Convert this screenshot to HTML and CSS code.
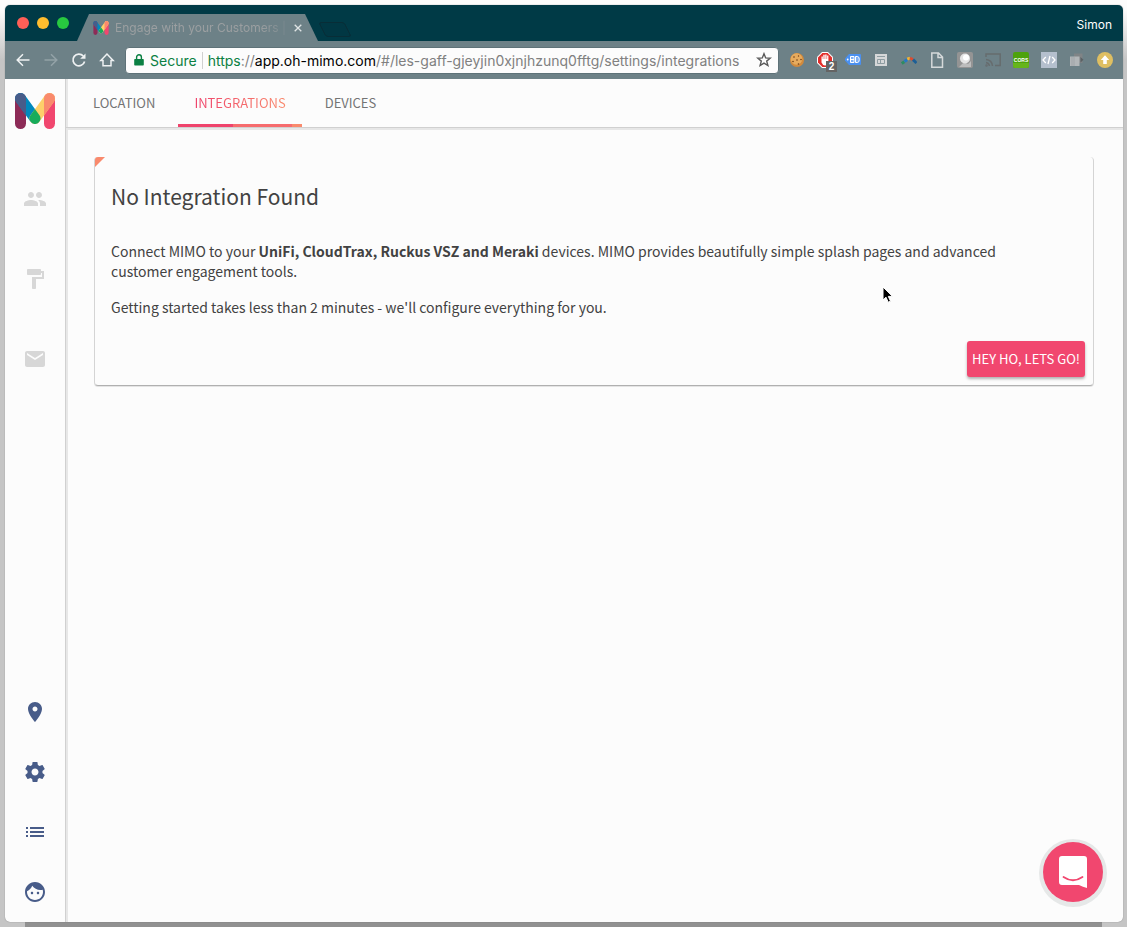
FILE: index.html
```html
<!DOCTYPE html>
<html lang="en">
<head>
<meta charset="utf-8">
<title>Engage with your Customers</title>
<link rel="stylesheet" href="styles.css">
</head>
<body>
<svg class="defs" width="0" height="0" aria-hidden="true">
  <defs>
    <clipPath id="leftBar"><rect x="0" y="0" width="11" height="36" rx="5.5"/></clipPath>
    <clipPath id="rightBar"><rect x="29" y="0" width="11" height="36" rx="5.5"/></clipPath>
    <clipPath id="fallBar"><rect x="-5.5" y="-5.5" width="35.7" height="11" rx="5.5" transform="translate(5.5 5.5) rotate(54)"/></clipPath>
  </defs>
  <symbol id="logo" viewBox="0 0 40 36">
    <rect x="0" y="0" width="11" height="36" rx="5.5" fill="#8d2b57"/>
    <rect x="29" y="0" width="11" height="36" rx="5.5" fill="#f1476f"/>
    <path d="M5.5 5.5 20 25.5" stroke="#0089bd" stroke-width="11" stroke-linecap="round"/>
    <path d="M34.5 5.5 20 25.5" stroke="#fdd06a" stroke-width="11" stroke-linecap="round"/>
    <g clip-path="url(#leftBar)"><path d="M5.5 5.5 20 25.5" stroke="#485c89" stroke-width="11" stroke-linecap="round"/></g>
    <g clip-path="url(#rightBar)"><path d="M34.5 5.5 20 25.5" stroke="#f98a6d" stroke-width="11" stroke-linecap="round"/></g>
    <g clip-path="url(#fallBar)"><path d="M34.5 5.5 20 25.5" stroke="#17ac5b" stroke-width="11" stroke-linecap="round"/></g>
  </symbol>
</svg>

<div class="window">
  <header class="titlebar">
    <div class="lights">
      <button class="light red" aria-label="Close window"></button>
      <button class="light amber" aria-label="Minimise window"></button>
      <button class="light green" aria-label="Zoom window"></button>
    </div>
    <div class="browser-tab">
      <svg class="favicon" viewBox="0 0 40 36"><use href="#logo"/></svg>
      <span class="tab-title">Engage with your Customers |</span>
      <button class="tab-close" aria-label="Close tab">
        <svg width="8" height="8" viewBox="0 0 8 8"><path d="M.7.7l6.600 6.600M7.300.7L.7 7.300" stroke="#dfe4e5" stroke-width="1.300"/></svg>
      </button>
    </div>
    <button class="new-tab" aria-label="New tab">
      <svg width="34" height="17" viewBox="0 0 34 17"><path d="M3 1.500h21q2 0 3 2l5 10q1 2-1 2H10q-2 0-3-2L2 3.500q-1-2 1-2z" fill="#013743" stroke="#082d37"/></svg>
    </button>
    <span class="profile">Simon</span>
  </header>

  <div class="toolbar">
    <nav class="nav-buttons">
      <button aria-label="Back"><svg width="16" height="16" viewBox="0 0 16 16"><path d="M14.500 8H2.500M8 2.200 2.200 8 8 13.800" fill="none" stroke="#eef1f2" stroke-width="1.500"/></svg></button>
      <button aria-label="Forward"><svg width="16" height="16" viewBox="0 0 16 16"><path d="M1.500 8h12M8 2.200 13.800 8 8 13.800" fill="none" stroke="#93a2a7" stroke-width="1.500"/></svg></button>
      <button aria-label="Reload"><svg width="16" height="16" viewBox="0 0 16 16"><path d="M13.600 9.500A5.900 5.900 0 1 1 12.300 4" fill="none" stroke="#eef1f2" stroke-width="1.700"/><path d="M14.500 1.500v5.300H9.200z" fill="#eef1f2"/></svg></button>
      <button aria-label="Home"><svg width="16" height="16" viewBox="0 0 16 16"><path d="M8 2 1.800 8.600H4v5.200h8V8.600h2.200z" fill="none" stroke="#eef1f2" stroke-width="1.500"/></svg></button>
    </nav>
    <div class="omnibox">
      <svg class="lock" width="10" height="12" viewBox="0 0 10 12"><path d="M1 5h8q.8 0 .8.800v5q0 .8-.8.800H1q-.8 0-.8-.8v-5Q.2 5 1 5z" fill="#0b8043"/><path d="M2.600 5.500V3.200a2.400 2.400 0 0 1 4.800 0v2.300" fill="none" stroke="#0b8043" stroke-width="1.400"/></svg>
      <span class="secure">Secure</span>
      <div class="address" role="textbox" contenteditable="true" spellcheck="false" aria-label="Address"><span class="scheme">https</span>://<span class="host">app.oh-mimo.com</span>/#/les-gaff-gjeyjin0xjnjhzunq0fftg/settings/integrations</div>
      <button class="star" aria-label="Bookmark"><svg width="16" height="16" viewBox="0 0 16 16"><path d="M8 1.700l1.700 4.200 4.500.3-3.500 2.900 1.200 4.400L8 11.100l-3.900 2.400 1.200-4.400L1.800 6.200l4.500-.3z" fill="none" stroke="#5a5a5a" stroke-width="1.400"/></svg></button>
    </div>
    <div class="extensions">
      <button aria-label="Cookies"><svg width="16" height="16" viewBox="0 0 16 16"><circle cx="8" cy="8" r="7" fill="#d28a3c"/><circle cx="7.500" cy="7" r="5.800" fill="#e6ab5e"/><g fill="#6e3d17"><circle cx="5" cy="5" r=".8"/><circle cx="9.500" cy="4" r=".7"/><circle cx="12" cy="7.500" r=".8"/><circle cx="8" cy="8" r=".8"/><circle cx="4" cy="9.500" r=".8"/><circle cx="9.500" cy="12" r=".8"/></g></svg></button>
      <button class="badged" aria-label="Ad blocker"><svg width="16" height="16" viewBox="0 0 16 16"><path d="M5 0h6l5 5v6l-5 5H5l-5-5V5z" fill="#fff"/><path d="M5.400 1h5.200L15 5.400v5.200L10.600 15H5.400L1 10.600V5.400z" fill="#e22d2a"/><path d="M4.500 8V4.500h1.300V7h.5V2.800h1.400V7h.5V2.500h1.400V7h.5V3.600h1.300v6.200q0 3.700-3.400 3.700-2.200 0-3.500-3z" fill="#fff"/></svg><span class="badge">2</span></button>
      <button aria-label="Tag assistant"><svg width="16" height="16" viewBox="0 0 16 16"><path d="M4 2h11q1 0 1 1v9q0 1-1 1H4L0 8.500v-2z" fill="#4a90f0"/><path d="M5.500 4.500H9v6H5.500zM5.500 7.500H9M10.500 4.500h2q1.800 0 1.800 3t-1.800 3h-2z" fill="#7fb0f5" stroke="#fff"/><circle cx="2.700" cy="7.500" r=".9" fill="#fff"/></svg></button>
      <button aria-label="Page layout"><svg width="16" height="16" viewBox="0 0 16 16"><path d="M2 2h12v12H2z" fill="#d5d7d8"/><path d="M4 4.500h8M4.500 7.500h7v4h-7zM7.500 7.500v4" fill="none" stroke="#8d9ca1"/></svg></button>
      <button aria-label="Analytics"><svg width="16" height="16" viewBox="0 0 16 16" fill="none" stroke-width="3"><path d="M.8 11.500l2.500-1.800" stroke="#2f8b62"/><path d="M3.500 9.500 6.300 7.500" stroke="#2579c5"/><path d="M6.300 7.200 9 6" stroke="#efb434"/><path d="M9 6l3 1.700" stroke="#d94d32"/><path d="M12 7.700l3.500 3.300" stroke="#1d5f96"/></svg></button>
      <button aria-label="Document"><svg width="16" height="16" viewBox="0 0 16 16"><path d="M2.800 1h6.700l4 4v10.200H2.800zM9 1v4.500h4.500" fill="none" stroke="#d5d9da" stroke-width="1.500"/></svg></button>
      <button aria-label="Balloon"><svg width="16" height="16" viewBox="0 0 16 16"><rect width="16" height="16" rx="2" fill="#949494"/><path d="M2 15l5-5 4 2 3-3v6z" fill="#bcbcbc"/><circle cx="8" cy="6.500" r="5" fill="#e4e4e4"/><circle cx="9" cy="5.500" r="3" fill="#fff"/></svg></button>
      <button aria-label="Cast"><svg width="16" height="16" viewBox="0 0 16 16" fill="none" stroke="#666c6e" stroke-width="1.500"><path d="M1 5V2h14.200v11.500H10M1 7.500q6 .5 6.500 6.500M1 10.500q3 .5 3.500 3.500"/><circle cx="1.500" cy="13.500" r=".5"/></svg></button>
      <button aria-label="CORS"><svg width="16" height="16" viewBox="0 0 16 16"><rect width="16" height="16" rx="2" fill="#4da20d"/><path d="M0 11h16v3q0 2-2 2H2q-2 0-2-2z" fill="#66b51b"/><text class="cors" x="8" y="10" text-anchor="middle">CORS</text></svg></button>
      <button aria-label="Code"><svg width="16" height="16" viewBox="0 0 16 16"><path d="M0 0h16v16H0z" fill="#b4bfcd"/><path d="M4.800 5 2 8l2.800 3M11.200 5 14 8l-2.800 3M9 4 7 12" fill="none" stroke="#fff" stroke-width="1.300"/></svg></button>
      <button aria-label="Windows"><svg width="16" height="16" viewBox="0 0 16 16"><path d="M5 1.500h8.500v9.500H5z" fill="#808486"/><path d="M1 4.500h9.500V14H1z" fill="#b2b6b8"/><path d="M3 5v9M5 5v9" stroke="#989fa2" stroke-width=".7"/><path d="M11.500 5 14.500 7.800l-3 2.700z" fill="#5a6164"/></svg></button>
      <button aria-label="Update available"><svg width="16" height="16" viewBox="0 0 16 16"><circle cx="8" cy="8" r="8" fill="#dfbf62"/><path d="M8 3.200 12.200 8H9.800v4H6.200V8H3.800z" fill="#fff"/></svg></button>
    </div>
  </div>

  <div class="app">
    <aside class="sidebar">
      <a href="#" class="brand" aria-label="Home"><svg width="40" height="36" viewBox="0 0 40 36"><use href="#logo"/></svg></a>
      <nav class="side-top">
        <a href="#" aria-label="People"><svg viewBox="0 0 24 24"><path d="M16 11c1.660 0 2.990-1.340 2.990-3S17.660 5 16 5s-3 1.340-3 3 1.340 3 3 3zm-8 0c1.660 0 2.990-1.340 2.990-3S9.660 5 8 5 5 6.340 5 8s1.340 3 3 3zm0 2c-2.330 0-7 1.170-7 3.500V19h14v-2.500c0-2.330-4.670-3.500-7-3.500zm8 0c-.29 0-.62.020-.97.050 1.160.84 1.970 1.970 1.970 3.450V19h6v-2.500c0-2.330-4.670-3.500-7-3.500z"/></svg></a>
        <a href="#" aria-label="Branding"><svg viewBox="0 0 24 24"><path d="M18 4V3c0-.55-.45-1-1-1H5c-.55 0-1 .45-1 1v4c0 .55.45 1 1 1h12c.55 0 1-.45 1-1V6h1v4H9v11c0 .55.45 1 1 1h2c.55 0 1-.45 1-1v-9h8V4h-3z"/></svg></a>
        <a href="#" aria-label="Mail"><svg viewBox="0 0 24 24"><path d="M20 4H4c-1.100 0-1.990.9-1.990 2L2 18c0 1.100.9 2 2 2h16c1.100 0 2-.9 2-2V6c0-1.100-.9-2-2-2zm0 4l-8 5-8-5V6l8 5 8-5v2z"/></svg></a>
      </nav>
      <nav class="side-bottom">
        <a href="#" aria-label="Location"><svg viewBox="0 0 24 24"><path d="M12 2C8.130 2 5 5.130 5 9c0 5.250 7 13 7 13s7-7.750 7-13c0-3.870-3.130-7-7-7zm0 9.500c-1.380 0-2.500-1.120-2.500-2.500s1.120-2.500 2.500-2.500 2.500 1.120 2.500 2.500-1.120 2.500-2.500 2.500z"/></svg></a>
        <a href="#" aria-label="Settings"><svg viewBox="0 0 24 24"><path d="M19.430 12.980c.04-.32.070-.64.070-.98s-.03-.66-.07-.98l2.110-1.650c.19-.15.24-.42.120-.64l-2-3.460c-.12-.22-.39-.3-.61-.22l-2.490 1c-.52-.4-1.080-.73-1.690-.98l-.38-2.650C14.460 2.180 14.250 2 14 2h-4c-.25 0-.46.180-.49.420l-.38 2.650c-.61.250-1.170.59-1.690.98l-2.490-1c-.23-.09-.49 0-.61.220l-2 3.460c-.13.220-.07.490.12.640l2.110 1.650c-.04.320-.07.650-.07.980s.03.660.07.980l-2.110 1.650c-.19.150-.24.420-.12.640l2 3.460c.12.220.39.300.61.220l2.490-1c.52.400 1.080.730 1.690.980l.38 2.650c.03.240.24.420.49.420h4c.25 0 .46-.18.49-.42l.38-2.650c.61-.25 1.170-.59 1.690-.98l2.490 1c.23.090.49 0 .61-.22l2-3.460c.12-.22.070-.49-.12-.64l-2.110-1.650zM12 15.500c-1.930 0-3.500-1.570-3.500-3.500s1.570-3.500 3.500-3.500 3.500 1.570 3.500 3.500-1.570 3.500-3.500 3.500z"/></svg></a>
        <a href="#" aria-label="List"><svg viewBox="0 0 24 24"><path d="M3 13h2v-2H3v2zm0 4h2v-2H3v2zm0-8h2V7H3v2zm4 4h14v-2H7v2zm0 4h14v-2H7v2zM7 7v2h14V7H7z"/></svg></a>
        <a href="#" aria-label="Account"><svg viewBox="0 0 24 24"><path d="M9 11.750c-.69 0-1.250.56-1.250 1.250s.56 1.250 1.250 1.250 1.250-.56 1.250-1.250-.56-1.250-1.250-1.250zm6 0c-.69 0-1.250.56-1.250 1.250s.56 1.250 1.250 1.250 1.250-.56 1.250-1.250-.56-1.250-1.250-1.250zM12 2C6.480 2 2 6.480 2 12s4.480 10 10 10 10-4.480 10-10S17.520 2 12 2zm0 18c-4.410 0-8-3.590-8-8 0-.29.020-.58.050-.86 2.360-1.050 4.230-2.980 5.210-5.370C11.070 8.330 14.050 10 17.420 10c.78 0 1.530-.09 2.250-.26.210.71.330 1.470.33 2.260 0 4.410-3.590 8-8 8z"/></svg></a>
      </nav>
    </aside>

    <main class="main">
      <nav class="tabs">
        <a href="#" class="tab">LOCATION</a>
        <a href="#" class="tab active"><span>INTEGRATIONS</span></a>
        <a href="#" class="tab">DEVICES</a>
      </nav>
      <section class="card">
        <h1>No Integration Found</h1>
        <p>Connect MIMO to your <strong>UniFi, CloudTrax, Ruckus VSZ and Meraki</strong> devices. MIMO provides beautifully simple splash pages and advanced customer engagement tools.</p>
        <p>Getting started takes less than 2 minutes - we'll configure everything for you.</p>
        <div class="actions"><button class="primary">HEY HO, LETS GO!</button></div>
      </section>
    </main>

    <button class="messenger" aria-label="Open chat">
      <svg width="28" height="32" viewBox="0 0 28 32"><path d="M3 0h22q3 0 3 3v29q-4-1-8-3H3q-3 0-3-3V3q0-3 3-3z" fill="#fff"/><path d="M4.500 21q9.500 6.500 19 0" fill="none" stroke="#f1476f" stroke-width="1.800" stroke-linecap="round"/></svg>
    </button>
  </div>
</div>

<svg class="cursor" width="12" height="18" viewBox="0 0 12 18" aria-hidden="true"><path d="M1 1v13l3-2.800 2.200 5 2.300-1-2.200-4.800h4.200z" fill="#000" stroke="#fff"/></svg>
</body>
</html>
```

FILE: styles.css
```css
* {
  box-sizing: border-box;
}

body {
  margin: 0;
  height: 100vh;
  padding: 5px 4px 5px 5px;
  background:
    linear-gradient(#919191, #919191) center bottom / calc(100% - 50px) 5px no-repeat,
    linear-gradient(#fcfcfc 10px, #c5c5c5 60px);
  font-family: "Noto Sans CJK SC", "Open Sans", sans-serif;
  color: #424242;
}

button {
  margin: 0;
  padding: 0;
  border: 0;
  background: none;
  font: inherit;
  color: inherit;
  cursor: pointer;
}

svg {
  display: block;
}

.defs {
  position: absolute;
}

.window {
  display: flex;
  flex-direction: column;
  height: 100%;
  border-radius: 5px;
  overflow: hidden;
  background: #fcfcfc;
  box-shadow: 0 0 1px #666;
}

/* Browser chrome */

.titlebar {
  display: flex;
  align-items: flex-end;
  height: 36px;
  background: #003a46;
  font-family: Inter, sans-serif;
}

.lights {
  display: flex;
  gap: 8px;
  align-self: center;
  padding: 0 8px 0 12px;
}

.light {
  width: 12px;
  height: 12px;
  border-radius: 50%;
}

.red {
  background: #ff5f57;
}

.amber {
  background: #ffbd2e;
}

.green {
  background: #28c940;
}

.browser-tab {
  display: flex;
  align-items: center;
  width: 241px;
  height: 27px;
  padding: 0 16px;
  background: #6d8187;
  clip-path: polygon(12px 0, 228px 0, 100% 100%, 0 100%);
}

.favicon {
  width: 16px;
  height: 14px;
}

.tab-title {
  flex: 1;
  margin: 0 8px 0 6px;
  white-space: nowrap;
  font-size: 12px;
  color: #9b9fa1;
  mask-image: linear-gradient(90deg, #000 85%, transparent 105%);
}

.new-tab {
  align-self: center;
  margin-top: 12px;
}

.profile {
  align-self: center;
  margin: 2px 11px 0 auto;
  font-size: 12px;
  color: #fff;
}

.toolbar {
  display: flex;
  align-items: center;
  height: 38px;
  padding: 0 10px;
  background: #6d8187;
}

.nav-buttons {
  display: flex;
  gap: 12px;
  margin-right: 10px;
}

.omnibox {
  display: flex;
  flex: 1;
  align-items: center;
  min-width: 0;
  height: 27px;
  padding: 0 6px 0 8px;
  border: 1px solid #5e7278;
  border-radius: 4px;
  background: #fcfcfc;
  font-family: Inter, sans-serif;
  font-size: 14px;
}

.secure {
  margin: 0 5px 0 6px;
  color: #0b8043;
}

.address {
  flex: 1;
  min-width: 0;
  padding-left: 5px;
  border-left: 1px solid #d0d0d0;
  outline: 0;
  overflow: hidden;
  white-space: nowrap;
  color: #808080;
}

.scheme {
  color: #0b8043;
}

.host {
  color: #000;
}

.extensions {
  display: flex;
  gap: 12px;
  margin-left: 10px;
}

.badged {
  position: relative;
}

.badge {
  position: absolute;
  right: -4px;
  bottom: -4px;
  width: 11px;
  height: 11px;
  background: #646464;
  color: #fff;
  font: bold 10px/11px "Liberation Sans", sans-serif;
}

.cors {
  font: bold 5px "Liberation Sans", sans-serif;
  fill: #fff;
}

/* Application */

.app {
  position: relative;
  display: flex;
  flex: 1;
  min-height: 0;
}

.sidebar {
  display: flex;
  flex-direction: column;
  align-items: center;
  width: 61px;
  padding: 14px 0 18px;
  border-right: 1px solid #d0d0d0;
  box-shadow: 2px 0 0 #e7e7e7;
}

.side-top,
.side-bottom {
  display: flex;
  flex-direction: column;
}

.sidebar nav svg {
  width: 24px;
  height: 24px;
}

.side-top {
  gap: 56px;
  margin-top: 58px;
  fill: #d7d7d7;
}

.side-bottom {
  gap: 36px;
  margin-top: auto;
  fill: #485c89;
}

.main {
  flex: 1;
  min-width: 0;
}

.tabs {
  display: flex;
  gap: 7px;
  height: 49px;
  padding-left: 11px;
  border-bottom: 1px solid #d0d0d0;
  box-shadow: 0 2px 0 #e7e7e7;
}

.tab {
  padding: 0 16px;
  border-bottom: 3px solid transparent;
  font-size: 13px;
  line-height: 48px;
  color: #747474;
  text-decoration: none;
}

.active {
  border-image: linear-gradient(90deg, #ef436c 45%, #f66c6e 45% 90%, #f98a6d 90%) 3;
}

.active span {
  background: linear-gradient(90deg, #ef436c, #f98a6d);
  background-clip: text;
  color: transparent;
}

.card {
  position: relative;
  margin: 29px 29px 0 28px;
  padding: 21px 8px 8px 16px;
  border: 1px solid #d4d4d4;
  border-top: 0;
  border-bottom-color: #b0b0b0;
  border-radius: 4px;
  box-shadow: 0 1px 0 #e4e4e4;
  font-size: 14px;
  line-height: 20px;
}

.card::before {
  content: "";
  position: absolute;
  top: 0;
  left: 0;
  width: 10px;
  height: 10px;
  border-radius: 3px 0 0 0;
  background: #f98a6d;
  clip-path: polygon(0 0, 100% 0, 0 100%);
}

.card h1 {
  margin: 0 0 27px;
  font-size: 21px;
  line-height: 36px;
  font-weight: 400;
}

.card p {
  margin: 0 0 16px;
  padding-right: 48px;
}

.actions {
  display: flex;
  justify-content: flex-end;
  margin-top: 24px;
}

.primary {
  height: 36px;
  padding: 0 5px;
  border-radius: 3px;
  background: #f1476f;
  box-shadow: 0 2px 3px rgba(0, 0, 0, 0.3);
  color: #fff;
  font-size: 13px;
}

.messenger {
  position: absolute;
  right: 20px;
  bottom: 20px;
  display: grid;
  place-items: center;
  width: 60px;
  height: 60px;
  border-radius: 50%;
  background: #f1476f;
  box-shadow: 0 1px 0 4px #e6e8e8;
}

.cursor {
  position: absolute;
  left: 882px;
  top: 286px;
}
```
